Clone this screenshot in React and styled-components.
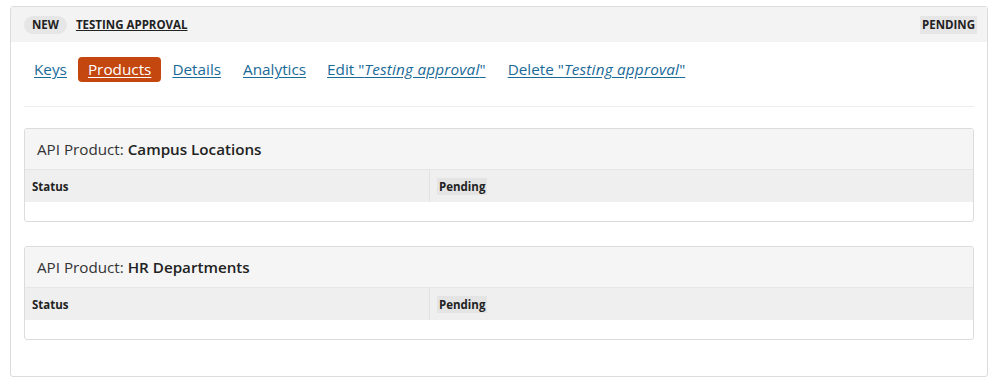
import React from "react";
import styled, { createGlobalStyle } from "styled-components";

const linkBlue = "#1a6a98";
const rust = "#c4470f";
const border = "#dcdcdc";

const GlobalStyle = createGlobalStyle`
  html, body {
    margin: 0;
    padding: 0;
    background: #fff;
    font-family: "Open Sans", "Liberation Sans", sans-serif;
    color: #333;
  }
`;

const Page = styled.div`
  padding: 6px 10px 10px 10px;
`;

const Panel = styled.div`
  border: 1px solid ${border};
  border-radius: 3px;
  background: #fff;
  width: 978px;
  box-sizing: border-box;
`;

const PanelHeader = styled.div`
  display: flex;
  justify-content: space-between;
  align-items: center;
  height: 35px;
  padding: 0 10px 0 13px;
  background: #f3f3f3;
  font-size: 11.5px;
  font-weight: 700;
  color: #222;
`;

const HeaderLeft = styled.div`
  display: flex;
  align-items: center;
  gap: 9px;
`;

const Pill = styled.span`
  background: #e6e6e6;
  border-radius: 10px;
  padding: 2px 8px;
  line-height: 14px;
`;

const TitleLink = styled.a`
  color: #222;
  text-decoration: underline;
`;

const StateTag = styled.span`
  background: #e6e6e6;
  padding: 2px 2px;
  line-height: 14px;
`;

const PanelBody = styled.div`
  padding: 15px 13px 36px 13px;
`;

const Nav = styled.nav`
  display: flex;
  align-items: center;
  padding: 0 0 24px 0;
  border-bottom: 1px solid #ececec;
  margin-bottom: 21px;
`;

const NavLink = styled.a`
  font-size: 15.3px;
  line-height: 21px;
  padding: 2px 10px;
  margin-right: ${(p) => p.$gap ?? 2}px;
  border-radius: 4px;
  color: ${(p) => (p.$active ? "#fff" : linkBlue)};
  background: ${(p) => (p.$active ? rust : "transparent")};
  text-decoration: underline;
  text-underline-offset: 2px;
  cursor: pointer;
`;

const Quoted = styled.em`
  font-style: italic;
  letter-spacing: 0.2px;
`;

const Card = styled.div`
  border: 1px solid ${border};
  border-radius: 3px;
  margin-bottom: 24px;
  overflow: hidden;
  &:last-child {
    margin-bottom: 0;
  }
`;

const CardTitle = styled.div`
  background: #f5f5f5;
  border-bottom: 1px solid #e6e6e6;
  font-size: 15.2px;
  padding: 0 12px;
  height: 40px;
  display: flex;
  align-items: center;
  color: #333;
  b {
    font-weight: 600;
    margin-left: 4px;
    color: #222;
  }
`;

const Table = styled.div`
  display: grid;
  grid-template-columns: 404px 1fr;
  background: #efefef;
  font-size: 11.5px;
  font-weight: 700;
  color: #222;
  margin-bottom: 19px;
`;

const Cell = styled.div`
  height: 32px;
  display: flex;
  align-items: center;
  padding: 0 7px;
  & + & {
    border-left: 1px solid #e2e2e2;
  }
`;

const Mark = styled.span`
  background: #e4e4e4;
  padding: 1px 2px;
`;

const products = ["Campus Locations", "HR Departments"];

const App = () => (
  <Page>
    <GlobalStyle />
    <Panel>
      <PanelHeader>
        <HeaderLeft>
          <Pill>NEW</Pill>
          <TitleLink>TESTING APPROVAL</TitleLink>
        </HeaderLeft>
        <StateTag>PENDING</StateTag>
      </PanelHeader>
      <PanelBody>
        <Nav>
          <NavLink $gap={1}>Keys</NavLink>
          <NavLink $active $gap={1}>Products</NavLink>
          <NavLink $gap={2}>Details</NavLink>
          <NavLink $gap={1}>Analytics</NavLink>
          <NavLink $gap={2}>
            Edit "<Quoted>Testing approval</Quoted>"
          </NavLink>
          <NavLink $gap={0}>
            Delete "<Quoted>Testing approval</Quoted>"
          </NavLink>
        </Nav>
        {products.map((name) => (
          <Card key={name}>
            <CardTitle>
              API Product: <b>{name}</b>
            </CardTitle>
            <Table>
              <Cell>Status</Cell>
              <Cell>
                <Mark>Pending</Mark>
              </Cell>
            </Table>
          </Card>
        ))}
      </PanelBody>
    </Panel>
  </Page>
);

export default App;
